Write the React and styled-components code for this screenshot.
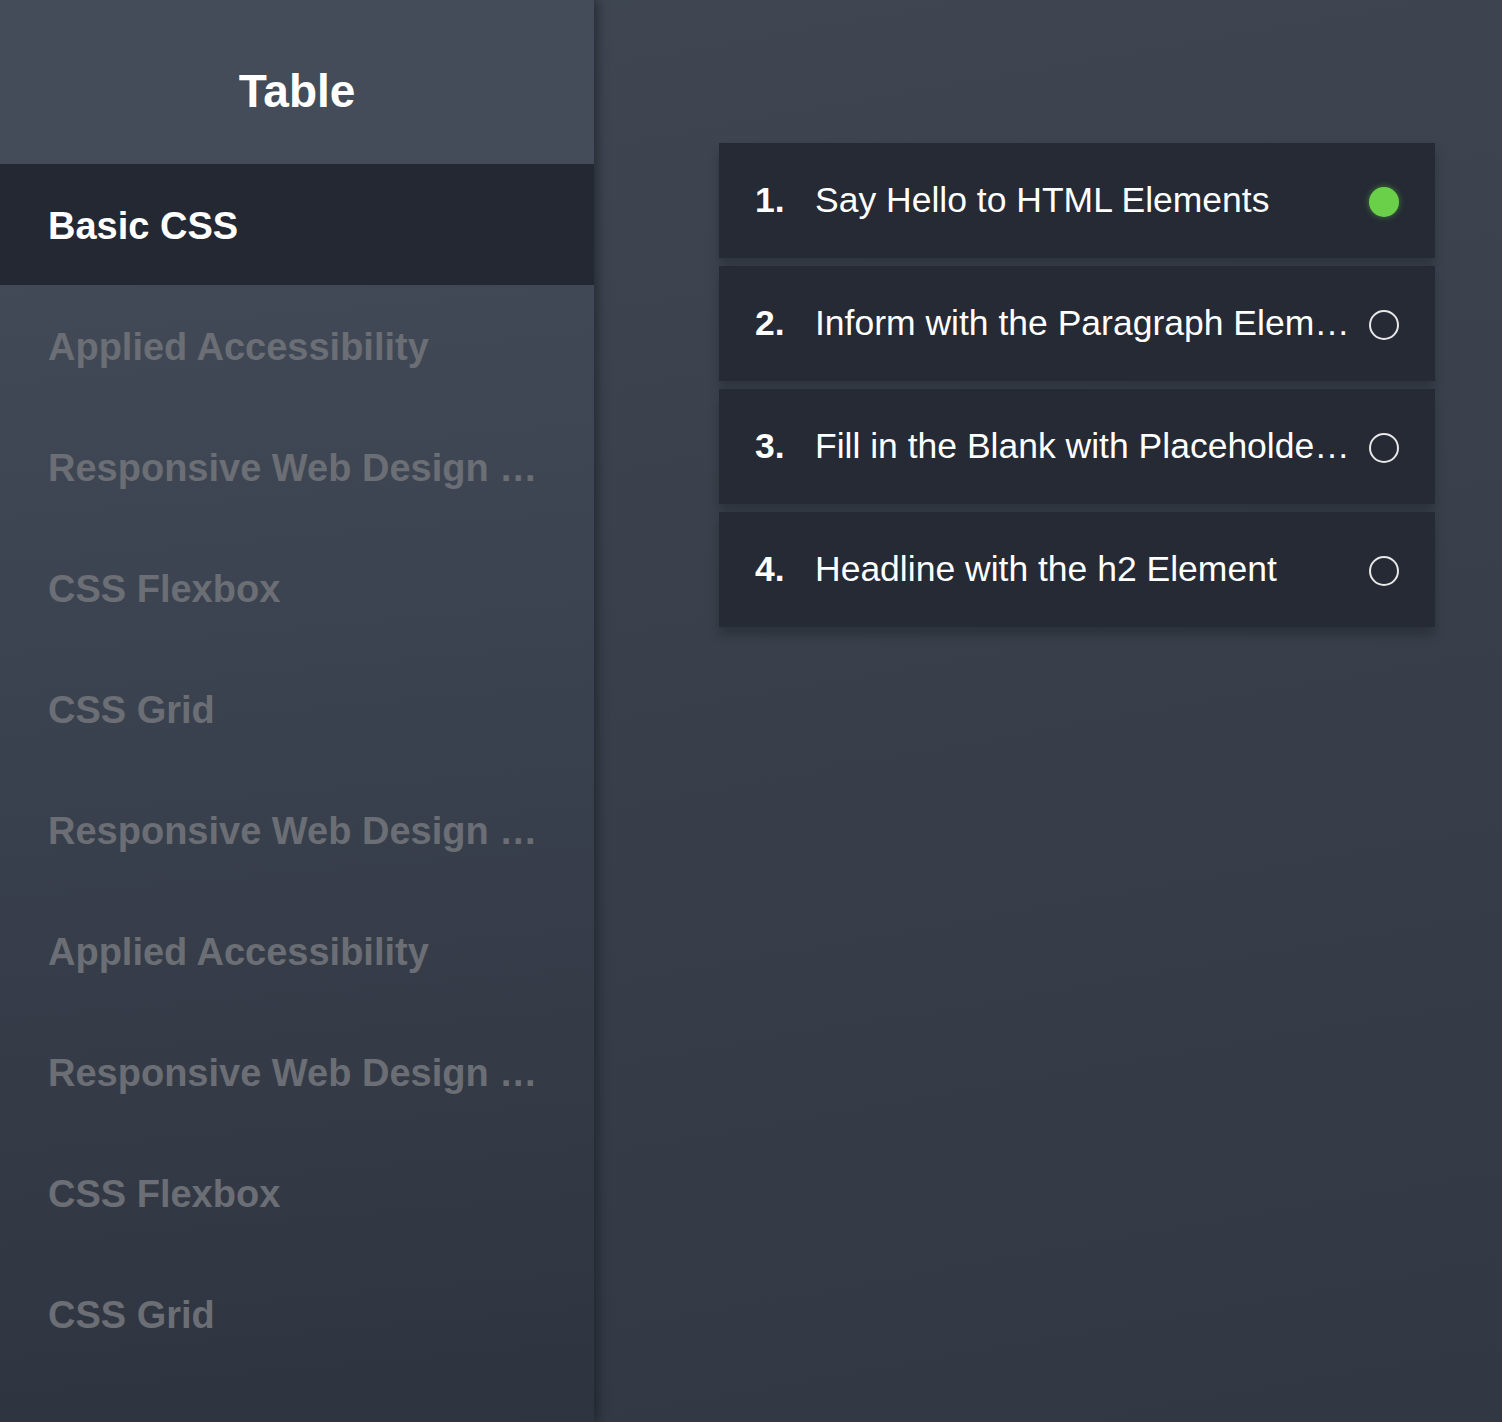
import React from 'react';
import styled, { createGlobalStyle } from 'styled-components';

const GlobalStyle = createGlobalStyle`
  html, body {
    margin: 0;
    padding: 0;
    background: #3a414c;
    font-family: "Liberation Sans", Arial, sans-serif;
  }
`;

const StyledPage = styled.div`
  display: flex;
  width: 100%;
  height: 100vh;
  min-height: 1422px;
  overflow: hidden;
  background: linear-gradient(170deg, #3f4753 0%, #39404b 45%, #313843 100%);
`;

const StyledSidebar = styled.aside`
  position: relative;
  z-index: 1;
  flex: 0 0 594px;
  width: 594px;
  min-width: 0;
  display: flex;
  flex-direction: column;
  background: linear-gradient(175deg, #454e5a 0%, #3b4350 45%, #2e343f 100%);
  box-shadow: 4px 0 10px rgba(0, 0, 0, 0.35);
`;

const StyledTitle = styled.h1`
  box-sizing: border-box;
  margin: 0;
  height: 164px;
  padding-top: 18px;
  display: flex;
  align-items: center;
  justify-content: center;
  color: #ffffff;
  font-size: 46px;
  font-weight: 700;
  background: #434c58;
`;

const StyledNavItem = styled.div`
  box-sizing: border-box;
  height: 121px;
  display: flex;
  align-items: center;
  padding: 4px 48px 0;
  min-width: 0;
  font-size: 38px;
  font-weight: 700;
  color: ${({ active }) => (active ? '#ffffff' : '#6b6e74')};
  background: ${({ active }) => (active ? '#232833' : 'transparent')};

  span {
    min-width: 0;
    white-space: nowrap;
    overflow: hidden;
    text-overflow: ellipsis;
  }
`;

const StyledMain = styled.main`
  flex: 1;
  min-width: 0;
  padding: 143px 67px 0 125px;
`;

const StyledList = styled.ol`
  list-style: none;
  margin: 0;
  padding: 0;
  display: flex;
  flex-direction: column;
  gap: 8px;
`;

const StyledCard = styled.li`
  height: 115px;
  display: flex;
  align-items: center;
  padding: 0 36px;
  background: #252a34;
  box-shadow: 0 8px 10px rgba(0, 0, 0, 0.22);
  color: #ffffff;
  font-size: 35.5px;
`;

const StyledNum = styled.span`
  flex: 0 0 60px;
  font-weight: 700;
`;

const StyledLabel = styled.span`
  flex: 1;
  min-width: 0;
  white-space: nowrap;
  overflow: hidden;
  text-overflow: ellipsis;
  padding-right: 10px;
`;

const StyledDot = styled.span`
  flex: 0 0 auto;
  box-sizing: border-box;
  width: 30px;
  height: 30px;
  margin-top: 2px;
  border-radius: 50%;
  background: ${({ done }) => (done ? '#6ad04a' : 'transparent')};
  border: ${({ done }) => (done ? 'none' : '2px solid #e8e8e8')};
  box-shadow: ${({ done }) => (done ? '0 0 6px rgba(106, 208, 74, 0.5)' : 'none')};
`;

const sections = [
  'Basic CSS',
  'Applied Accessibility',
  'Responsive Web Design Principles',
  'CSS Flexbox',
  'CSS Grid',
  'Responsive Web Design Principles',
  'Applied Accessibility',
  'Responsive Web Design Principles',
  'CSS Flexbox',
  'CSS Grid',
];

const lessons = [
  { title: 'Say Hello to HTML Elements', done: true },
  { title: 'Inform with the Paragraph Element', done: false },
  { title: 'Fill in the Blank with Placeholder Text', done: false },
  { title: 'Headline with the h2 Element', done: false },
];

const App = () => (
  <>
    <GlobalStyle />
    <StyledPage>
      <StyledSidebar>
        <StyledTitle>Table</StyledTitle>
        {sections.map((name, i) => (
          <StyledNavItem key={i} active={i === 0}>
            <span>{name}</span>
          </StyledNavItem>
        ))}
      </StyledSidebar>

      <StyledMain>
        <StyledList>
          {lessons.map((lesson, i) => (
            <StyledCard key={i}>
              <StyledNum>{i + 1}.</StyledNum>
              <StyledLabel>{lesson.title}</StyledLabel>
              <StyledDot done={lesson.done} />
            </StyledCard>
          ))}
        </StyledList>
      </StyledMain>
    </StyledPage>
  </>
);

export default App;
